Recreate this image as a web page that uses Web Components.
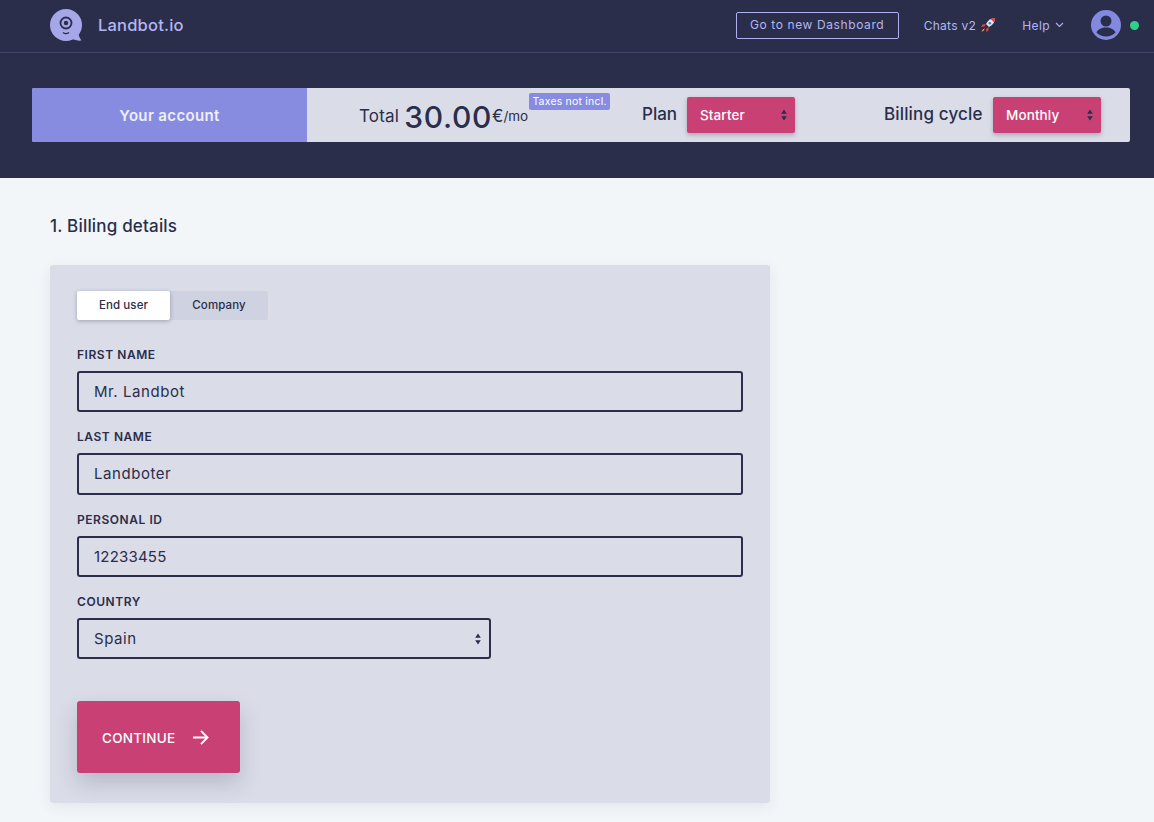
<!DOCTYPE html>
<html lang="en"><head><meta charset="utf-8"><title>Landbot</title>
<style>
html,body{margin:0;padding:0;background:#f2f6f9;font-family:Inter,"Liberation Sans",sans-serif;color:#2a2e4a;}
body{height:822px;overflow:hidden}
</style></head><body>
<lb-header></lb-header>
<lb-main></lb-main>
<script>
function def(name, html){
  customElements.define(name, class extends HTMLElement{
    constructor(){super();const r=this.attachShadow({mode:'open'});r.innerHTML=typeof html==='function'?html(this):html;}
  });
}
const arrows=(c)=>`<svg width="6" height="12" viewBox="0 0 6 12" style="display:block"><path d="M3 0.5 L5.800 4.800 H0.200Z M3 11.500 L5.800 7.200 H0.200Z" fill="${c}"/></svg>`;

def('lb-logo',`<style>:host{display:flex;align-items:center;gap:15px}
span{font-size:16.500px;font-weight:500;color:#b4b6f3;letter-spacing:.2px;line-height:20px}svg{display:block}</style>
<svg width="33" height="32" viewBox="0 0 33 32"><circle cx="16" cy="16" r="16" fill="#a5a7e8"/><path d="M28 22c.4 4 1.500 7 3.500 9.600-3.500.3-7-.3-10-2z" fill="#a5a7e8"/><circle cx="16" cy="14" r="5.500" fill="none" stroke="#2a2e4a" stroke-width="1.800"/><circle cx="16" cy="14" r="2.200" fill="#2a2e4a"/><path d="M13 23.500c2 1.500 4 1.500 6 0" fill="none" stroke="#2a2e4a" stroke-width="1.300"/></svg><span>Landbot.io</span>`);

def('lb-header',`<style>:host{display:flex;flex-direction:column;background:#2a2e4a;height:178px}
.nav{height:50px;padding:0 15px 2px 50px;border-bottom:1px solid #41446a;display:flex;align-items:center}
.sp{flex:1}
.btn{box-sizing:border-box;width:163px;height:27px;border:1px solid #aeb0ef;border-radius:2px;color:#b4b6f3;font-size:12px;letter-spacing:.6px;display:flex;align-items:center;justify-content:center;margin-right:25px;white-space:nowrap;padding-bottom:1px}
.lnk{color:#b4b6f3;font-size:12px;letter-spacing:.3px;display:flex;align-items:center;gap:4px;white-space:nowrap}
.chats{margin-right:26px}
.help{margin-right:27px;gap:5px;letter-spacing:.4px}
.avatar{display:block;margin-right:9px}
.dot{width:9px;height:9px;border-radius:50%;background:#2fd18a}
.bar-wrap{padding:35px 24px 0 32px}
</style>
<div class="nav"><lb-logo></lb-logo><div class="sp"></div>
<div class="btn">Go to new Dashboard</div>
<div class="lnk chats">Chats v2 <svg width="16" height="16" viewBox="0 0 16 16"><path d="M15 1c-4 0-7 2-9 6l3 3c4-2 6-5 6-9z" fill="#dfe6ee"/><path d="M15 1c-1.600 0-3 .3-4.300 1l3.300 3.300c.7-1.300 1-2.700 1-4.300z" fill="#d8433c"/><circle cx="9.800" cy="6.200" r="1.300" fill="#4d7fc4"/><path d="M6 7l-3.500.6L1 10l3.500-.4zM9 10l-.6 3.500L6 15l.4-3.500z" fill="#d8433c"/><path d="M4.500 11.500c-1.500.5-2.500 1.700-3 3.200 1.500-.5 2.700-1.500 3.200-3z" fill="#f5b52e"/></svg></div>
<div class="lnk help">Help <svg width="9" height="6" viewBox="0 0 9 6"><path d="M1 1l3.500 3.500L8 1" fill="none" stroke="#aeb0ef" stroke-width="1.100"/></svg></div>
<svg class="avatar" width="30" height="30" viewBox="0 0 30 30"><circle cx="15" cy="15" r="15" fill="#8489e0"/><circle cx="15" cy="11" r="5.500" fill="#2a2e4a"/><path d="M5.500 22.500c1.500-3.500 5-5 9.500-5s8 1.500 9.500 5c-2.500 2.500-5.800 4-9.500 4s-7-1.500-9.500-4z" fill="#2a2e4a"/></svg>
<div class="dot"></div></div>
<div class="bar-wrap"><lb-account-bar></lb-account-bar></div>`);

def('lb-pink-select',`<style>:host{display:flex;box-sizing:border-box;width:108px;height:36px;background:#c94174;border-radius:2px;color:#fff;font-size:13.500px;font-weight:500;align-items:center;justify-content:space-between;padding:0 8px 0 13px;box-shadow:0 2px 4px rgba(42,46,74,.3);letter-spacing:.1px;flex:none}</style><slot></slot>${arrows('#2a2e4a')}`);

def('lb-account-bar',`<style>:host{display:flex;height:54px;background:#dadce8;border-radius:2px;align-items:center;color:#2a2e4a}
.l{width:275px;height:100%;background:#878ce0;color:#eeeffc;font-size:15px;font-weight:600;letter-spacing:.35px;display:flex;align-items:center;justify-content:center;border-radius:2px 0 0 2px;flex:none}
.total{margin-left:52px;display:flex;align-items:center;position:relative;white-space:nowrap;font-size:17px;width:170px;height:54px;flex:none}
.t{margin-top:2px;letter-spacing:.2px}
.n{font-size:30px;font-weight:500;margin:4px 1px 0 5px;letter-spacing:.7px;line-height:36px}
.eu{font-size:17px;margin:2px 0 0 -1px}.mo{font-size:13.500px;margin-top:2px}
.tag{position:absolute;left:170px;top:5px;background:#878ce0;color:#fff;font-size:10.500px;letter-spacing:.2px;border-radius:2px;height:17px;width:81px;display:flex;align-items:center;justify-content:center;white-space:nowrap}
.lb{font-size:17px;font-weight:500;white-space:nowrap;flex:none;margin-top:-2px}
.plan{width:35px;margin-left:113px;margin-right:10px}
.cyc{width:99px;margin-left:89px;margin-right:10px;letter-spacing:.15px}
</style>
<div class="l">Your account</div>
<div class="total"><span class="t">Total</span><span class="n">30.00</span><span class="eu">€</span><span class="mo">/mo</span><span class="tag">Taxes not incl.</span></div>
<div class="lb plan">Plan</div><lb-pink-select>Starter</lb-pink-select>
<div class="lb cyc">Billing cycle</div><lb-pink-select>Monthly</lb-pink-select>`);

def('lb-field',(h)=>`<style>:host{display:block}
label{display:block;font-size:12px;font-weight:600;letter-spacing:.55px;text-transform:uppercase;line-height:14px;margin-bottom:9px;color:#2a2e4a}
.box{box-sizing:border-box;height:41.330px;border:2px solid #2a2e4a;border-radius:3px;display:flex;align-items:center;justify-content:space-between;padding:0 8px 0 15px;font-size:15px;letter-spacing:${h.getAttribute('ls')||'.55px'};color:#2a2e4a;width:${h.getAttribute('w')||'666px'}}
</style><label>${h.getAttribute('label')}</label><div class="box"><slot></slot>${h.hasAttribute('sel')?arrows('#2a2e4a'):''}</div>`);

def('lb-tabs',`<style>:host{display:flex;width:191px;height:29px;background:#cfd2e1;border-radius:2px;font-size:11.500px;letter-spacing:.1px;font-weight:500;color:#2a2e4a;flex:none}
div{display:flex;align-items:center;justify-content:center;height:28px;padding-bottom:1px}
.a{width:93px;background:#fff;border-radius:2px;box-shadow:0 1px 4px rgba(42,46,74,.35)}.b{flex:1}</style>
<div class="a">End user</div><div class="b">Company</div>`);

def('lb-continue',`<style>:host{display:flex;box-sizing:border-box;width:163px;height:72px;background:#c94174;border-radius:3px;color:#fff;font-size:13.500px;letter-spacing:.25px;align-items:center;padding:1px 0 0 25px;gap:17px;box-shadow:0 10px 22px rgba(42,46,74,.2);font-weight:500;flex:none}svg{display:block}</style>CONTINUE<svg width="17" height="15" viewBox="0 0 18 16"><path d="M1 8h15.500M9.500 1l7 7-7 7" fill="none" stroke="#fff" stroke-width="2"/></svg>`);

def('lb-main',`<style>:host{display:block;padding:37px 0 0 50px}
h2{margin:0 0 28px;font-size:17px;font-weight:500;line-height:22px;color:#2a2e4a;letter-spacing:.18px}
.card{box-sizing:border-box;width:720px;height:538px;background:#dadce8;border-radius:3px;padding:26px 27px;box-shadow:0 4px 14px rgba(42,46,74,.07);display:flex;flex-direction:column}
lb-tabs{margin-bottom:28px}
lb-field{margin-bottom:18px}
lb-continue{margin-top:24px}
</style>
<h2>1. Billing details</h2>
<div class="card"><lb-tabs></lb-tabs>
<lb-field label="First name">Mr. Landbot</lb-field>
<lb-field label="Last name">Landboter</lb-field>
<lb-field label="Personal ID" ls=".2px">12233455</lb-field>
<lb-field label="Country" sel w="414px">Spain</lb-field>
<lb-continue></lb-continue></div>`);
</script>
</body></html>
